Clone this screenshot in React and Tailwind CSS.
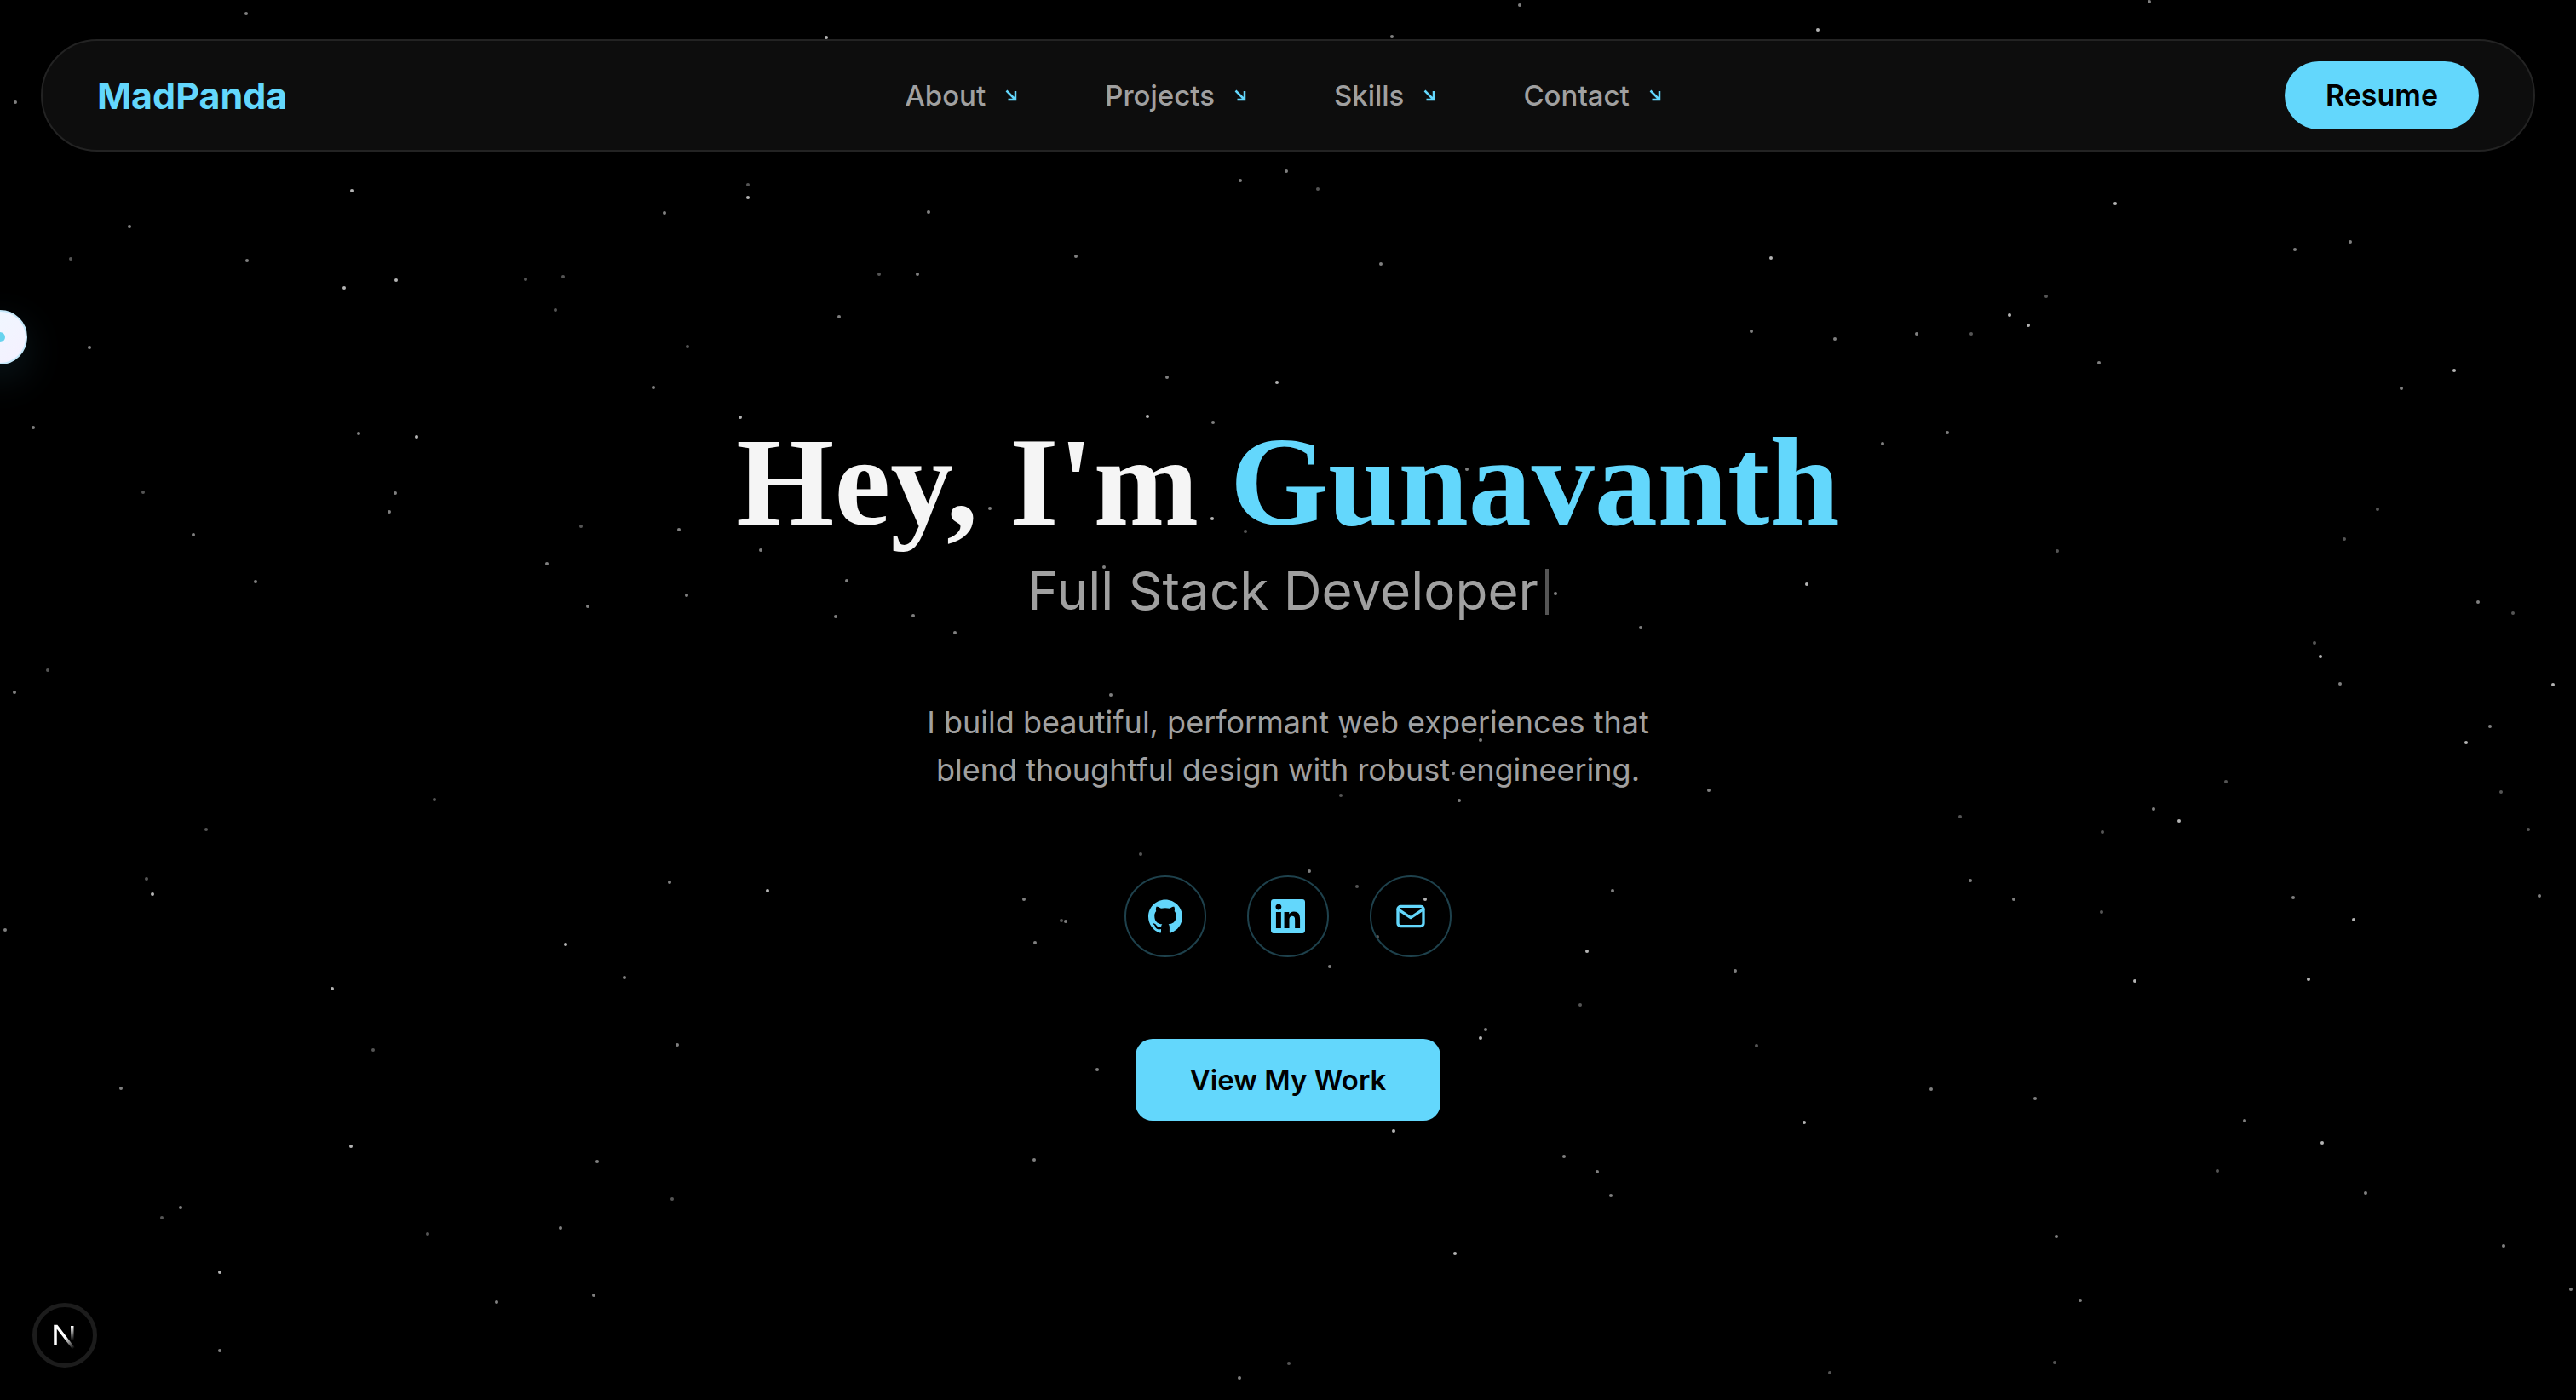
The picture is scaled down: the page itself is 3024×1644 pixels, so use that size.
const NAV_LINKS = ["About", "Projects", "Skills", "Contact"];

// Star field on a 3024 x 1644 canvas, grouped by brightness.
const BRIGHT_STARS = [
  [970, 44], [413, 224], [878, 232], [465, 329], [404, 338], [869, 490], [390, 1161], [412, 1346],
  [664, 1109], [901, 1046], [258, 1494], [179, 1050], [489, 513], [1499, 449], [1347, 489], [1423, 609],
  [1673, 1056], [1863, 1117], [1636, 1328], [1738, 1219], [1708, 1472], [2134, 35], [2079, 303],
  [2359, 370], [2381, 382], [2483, 239], [2881, 435], [2121, 686], [2724, 771], [2997, 804],
  [2895, 872], [2558, 964], [2763, 1080], [2710, 1150], [2506, 1152], [2118, 1318], [2726, 1342],
];

const MID_STARS = [
  [289, 16], [18, 120], [780, 250], [152, 266], [290, 306], [105, 408], [985, 372], [767, 455], [39, 502],
  [421, 509], [464, 579], [457, 601], [227, 628], [300, 683], [797, 622], [642, 662], [893, 646],
  [806, 699], [690, 712], [994, 682], [981, 724], [17, 813], [6, 1092], [786, 1036], [733, 1148],
  [795, 1227], [142, 1278], [701, 1364], [212, 1418], [658, 1442], [583, 1529], [697, 1521], [258, 1586],
  [1784, 6], [1634, 43], [1456, 212], [1510, 201], [1090, 249], [1263, 301], [1077, 322], [1621, 310],
  [1370, 443], [1424, 496], [1162, 597], [1296, 666], [1826, 697], [1926, 737], [1072, 723],
  [1121, 743], [1304, 816], [1722, 551], [1579, 865], [1738, 869], [1706, 908], [1713, 940], [2006, 928],
  [1537, 1023], [1202, 1056], [1893, 1046], [1251, 1082], [1215, 1107], [1561, 1135], [2037, 1140],
  [1744, 1209], [1288, 1256], [1214, 1362], [1836, 1358], [1875, 1376], [1891, 1404], [1455, 1618],
  [2523, 2], [2056, 389], [2694, 293], [2759, 284], [2154, 398], [2250, 392], [2464, 426], [2819, 456],
  [2286, 508], [2210, 521], [2909, 707], [2747, 803], [2923, 853], [2528, 950], [2313, 1034],
  [2364, 1056], [2692, 1054], [2981, 1052], [2267, 1279], [2389, 1290], [2635, 1316], [2777, 1401],
  [2414, 1452], [2939, 1463], [2442, 1527], [3018, 1514],
];

const DIM_STARS = [
  [878, 217], [83, 304], [617, 328], [661, 325], [652, 364], [807, 407], [168, 578], [682, 618], [56, 787],
  [510, 939], [242, 974], [172, 1032], [438, 1233], [190, 1430], [789, 1408], [502, 1449], [1547, 222],
  [1032, 322], [1462, 624], [1894, 920], [1574, 934], [1339, 1003], [1593, 1041], [1246, 1081],
  [1617, 1100], [1855, 1180], [1513, 1601], [2402, 348], [2314, 392], [2415, 647], [2791, 598],
  [2752, 633], [2950, 720], [2717, 755], [2613, 918], [2936, 930], [2301, 959], [2468, 977],
  [2968, 974], [2467, 1071], [2062, 1228], [2603, 1375], [2412, 1600], [2148, 1612],
];

function Stars({ points, className }) {
  return (
    <g className={className}>
      {points.map(([x, y]) => (
        <circle key={`${x}-${y}`} cx={x} cy={y} r="2" />
      ))}
    </g>
  );
}

function StarField() {
  return (
    <svg
      aria-hidden="true"
      viewBox="0 0 3024 1644"
      preserveAspectRatio="xMidYMid slice"
      className="pointer-events-none absolute inset-0 size-full"
    >
      <Stars points={BRIGHT_STARS} className="fill-[#b4b4b4]" />
      <Stars points={MID_STARS} className="fill-[#808080]" />
      <Stars points={DIM_STARS} className="fill-[#555555]" />
    </svg>
  );
}

function ArrowIcon() {
  return (
    <svg
      viewBox="0 0 28 28"
      fill="none"
      stroke="currentColor"
      strokeWidth="2.5"
      aria-hidden="true"
      className="size-7 text-[#63d7fc]"
    >
      <path d="M8.500 8.500L19 19M19 9V19H10.500" />
    </svg>
  );
}

function Header() {
  return (
    <header className="relative px-12 pt-[46px]">
      <nav className="flex items-center justify-between rounded-full border-2 border-[#232323] bg-[#0d0d0d] px-16 py-6">
        <a href="#home" className="text-[43px] leading-[60px] font-bold text-[#63d7fc]">
          MadPanda
        </a>
        <ul className="flex items-center gap-24">
          {NAV_LINKS.map((label) => (
            <li key={label}>
              <a
                href={`#${label.toLowerCase()}`}
                className="flex items-center gap-4 text-[33px] leading-[48px] font-medium text-[#a0a0a0]"
              >
                {label}
                <ArrowIcon />
              </a>
            </li>
          ))}
        </ul>
        <a
          href="#resume"
          className="rounded-full bg-[#63d7fc] px-12 py-4 text-[34px] leading-[48px] font-semibold text-black"
        >
          Resume
        </a>
      </nav>
    </header>
  );
}

function GithubIcon() {
  return (
    <svg viewBox="0 0 24 24" fill="currentColor" aria-hidden="true" className="size-10">
      <path d="M12 .297c-6.63 0-12 5.373-12 12 0 5.303 3.438 9.8 8.205 11.385.6.113.82-.258.82-.577 0-.285-.01-1.04-.015-2.04-3.338.724-4.042-1.61-4.042-1.61C4.422 18.07 3.633 17.7 3.633 17.7c-1.087-.744.084-.729.084-.729 1.205.084 1.838 1.236 1.838 1.236 1.07 1.835 2.809 1.305 3.495.998.108-.776.417-1.305.76-1.605-2.665-.3-5.466-1.332-5.466-5.93 0-1.31.465-2.38 1.235-3.22-.135-.303-.54-1.523.105-3.176 0 0 1.005-.322 3.3 1.23.96-.267 1.98-.399 3-.405 1.02.006 2.04.138 3 .405 2.28-1.552 3.285-1.23 3.285-1.23.645 1.653.24 2.873.12 3.176.765.84 1.23 1.91 1.23 3.22 0 4.61-2.805 5.625-5.475 5.92.42.36.81 1.096.81 2.22 0 1.606-.015 2.896-.015 3.286 0 .315.21.69.825.57C20.565 22.092 24 17.592 24 12.297c0-6.627-5.373-12-12-12" />
    </svg>
  );
}

function LinkedinIcon() {
  return (
    <svg viewBox="0 0 24 24" fill="currentColor" aria-hidden="true" className="size-10">
      <path d="M20.447 20.452h-3.554v-5.569c0-1.328-.027-3.037-1.852-3.037-1.853 0-2.136 1.445-2.136 2.939v5.667H9.351V9h3.414v1.561h.046c.477-.9 1.637-1.85 3.37-1.85 3.601 0 4.267 2.37 4.267 5.455v6.286zM5.337 7.433c-1.144 0-2.063-.926-2.063-2.065 0-1.138.92-2.063 2.063-2.063 1.14 0 2.064.925 2.064 2.063 0 1.139-.925 2.065-2.064 2.065zm1.782 13.019H3.555V9h3.564v11.452zM22.225 0H1.771C.792 0 0 .774 0 1.729v20.542C0 23.227.792 24 1.771 24h20.451C23.2 24 24 23.227 24 22.271V1.729C24 .774 23.2 0 22.222 0h.003z" />
    </svg>
  );
}

function MailIcon() {
  return (
    <svg
      viewBox="0 0 24 24"
      fill="none"
      stroke="currentColor"
      strokeWidth="2"
      strokeLinecap="round"
      strokeLinejoin="round"
      aria-hidden="true"
      className="size-10"
    >
      <rect x="3" y="5" width="18" height="14" rx="2" />
      <path d="M3 7l9 6l9 -6" />
    </svg>
  );
}

const SOCIALS = [
  { label: "GitHub", href: "#github", Icon: GithubIcon },
  { label: "LinkedIn", href: "#linkedin", Icon: LinkedinIcon },
  { label: "Email", href: "#email", Icon: MailIcon },
];

function Hero() {
  return (
    <main className="relative flex flex-col items-center px-12 pt-[308px] pb-24 text-center">
      <h1 className="font-['Liberation_Serif',serif] text-[148px] leading-[160px] font-bold text-[#f5f5f5]">
        Hey, I'm <span className="text-[#63d7fc]">Gunavanth</span>
      </h1>
      <p className="mt-3 text-[62px] leading-[72px] text-[#a0a0a0]">
        Full Stack Developer
        <span aria-hidden="true" className="ml-2 inline-block h-[54px] w-1 bg-[#555555] align-[-6px]" />
      </p>
      <p className="mt-[90px] max-w-4xl text-4xl leading-[56px] text-[#a0a0a0]">
        I build beautiful, performant web experiences that blend thoughtful design with robust engineering.
      </p>
      <ul className="mt-24 flex gap-12">
        {SOCIALS.map(({ label, href, Icon }) => (
          <li key={label}>
            <a
              href={href}
              aria-label={label}
              className="flex size-24 items-center justify-center rounded-full border-2 border-[#1e414c] text-[#63d7fc]"
            >
              <Icon />
            </a>
          </li>
        ))}
      </ul>
      <button
        type="button"
        className="mt-24 rounded-[20px] bg-[#63d7fc] px-16 py-6 text-[33px] leading-[48px] font-semibold text-black"
      >
        View My Work
      </button>
    </main>
  );
}

function SideToggle() {
  return (
    <button
      type="button"
      aria-label="Open side panel"
      className="absolute top-[364px] -left-8 flex size-16 items-center justify-center rounded-full border-2 border-[#c5e8fa] bg-linear-to-br from-[#eef9ff] to-[#f5f0ff] shadow-[0_16px_48px_rgba(99,215,252,0.12)]"
    >
      <span className="size-3 rounded-full bg-[#67d3ee]" />
    </button>
  );
}

function DevBadge() {
  return (
    <button
      type="button"
      aria-label="Open developer tools"
      className="absolute bottom-[38px] left-[38px] size-[76px] rounded-full border-[5px] border-[#1c1c1c] bg-black"
    >
      <svg viewBox="5 5 66 66" fill="none" aria-hidden="true" className="size-full">
        <defs>
          <linearGradient id="diagonal-fade" gradientUnits="userSpaceOnUse" x1="38" y1="41" x2="48" y2="54">
            <stop stopColor="white" />
            <stop offset="1" stopColor="white" stopOpacity="0" />
          </linearGradient>
          <linearGradient id="stem-fade" gradientUnits="userSpaceOnUse" x1="47" y1="27" x2="47" y2="44">
            <stop stopColor="white" />
            <stop offset="1" stopColor="white" stopOpacity="0" />
          </linearGradient>
        </defs>
        <path d="M27 50V27.500H28.500L48.500 53.500" stroke="url(#diagonal-fade)" strokeWidth="3.500" />
        <rect x="45" y="27" width="3.500" height="17" fill="url(#stem-fade)" />
      </svg>
    </button>
  );
}

export default function App() {
  return (
    <div className="relative min-h-screen overflow-hidden bg-black font-[Inter,sans-serif]">
      <StarField />
      <Header />
      <Hero />
      <SideToggle />
      <DevBadge />
    </div>
  );
}
